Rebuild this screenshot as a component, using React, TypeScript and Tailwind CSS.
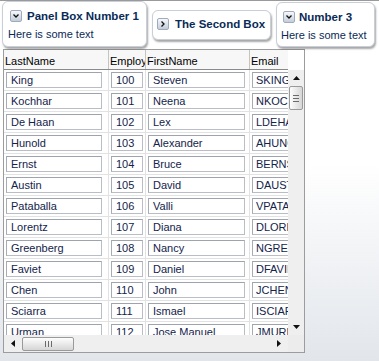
import React from 'react';

const rows = [
  ['King', '100', 'Steven', 'SKING'],
  ['Kochhar', '101', 'Neena', 'NKOCHHAR'],
  ['De Haan', '102', 'Lex', 'LDEHAAN'],
  ['Hunold', '103', 'Alexander', 'AHUNOLD'],
  ['Ernst', '104', 'Bruce', 'BERNST'],
  ['Austin', '105', 'David', 'DAUSTIN'],
  ['Pataballa', '106', 'Valli', 'VPATABAL'],
  ['Lorentz', '107', 'Diana', 'DLORENTZ'],
  ['Greenberg', '108', 'Nancy', 'NGREENBE'],
  ['Faviet', '109', 'Daniel', 'DFAVIET'],
  ['Chen', '110', 'John', 'JCHEN'],
  ['Sciarra', '111', 'Ismael', 'ISCIARRA'],
  ['Urman', '112', 'Jose Manuel', 'JMURMAN'],
];

const font = { fontFamily: '"Liberation Sans", Arial, sans-serif' };

const ToggleIcon = ({ open }: { open: boolean }) => (
  <span className="flex h-[12px] w-[12px] shrink-0 items-center justify-center rounded-[2px] border border-[#9fabbb] bg-gradient-to-b from-[#f7f9fc] to-[#c3cdd9]">
    <svg width="8" height="8" viewBox="0 0 8 8">
      {open ? (
        <path d="M1.5 2.5 L4 5 L6.5 2.5" stroke="#111" strokeWidth="1.3" fill="none" />
      ) : (
        <path d="M2.5 1.5 L5 4 L2.5 6.5" stroke="#111" strokeWidth="1.3" fill="none" />
      )}
    </svg>
  </span>
);

const Panel = ({
  title,
  open,
  className,
  headClass,
  bodyClass,
}: {
  title: string;
  open: boolean;
  className: string;
  headClass: string;
  bodyClass?: string;
}) => (
  <div
    className={`shrink-0 rounded-[6px] border border-[#c8cfd8] bg-white shadow-[1px_2px_2px_rgba(0,0,0,0.35)] ${className}`}
  >
    <div className={`flex items-center ${headClass}`}>
      <ToggleIcon open={open} />
      <span className="text-[11.5px] font-bold leading-[14px] whitespace-nowrap text-[#0a2a57]">{title}</span>
    </div>
    {open && (
      <div className={`text-[11px] leading-[14px] whitespace-nowrap text-[#0a2a57] ${bodyClass}`}>
        Here is some text
      </div>
    )}
  </div>
);

const Cell = ({ w, iw, value }: { w: string; iw: string; value: string }) => (
  <div className={`shrink-0 h-full border-r border-[#e2e2e2] pl-[2px] pt-[2px] ${w}`}>
    <div
      className={`h-[16px] overflow-hidden whitespace-nowrap border border-[#b9bec6] border-t-[#9ea4ad] border-l-[#a6acb5] bg-white pl-[4px] text-[11px] leading-[14px] text-[#13234a] ${iw}`}
    >
      {value}
    </div>
  </div>
);

export default function App() {
  return (
    <div
      style={font}
      className="h-[361px] w-[379px] overflow-hidden border-t border-[#9a9a9a] bg-gradient-to-b from-white from-[45%] to-[#e2e6eb]"
    >
      <div className="flex items-start gap-[5px] pl-[2px]">
        <Panel title="Panel Box Number 1" open className="mt-0 h-[46px] w-[145px]" headClass="gap-[5px] pl-[7px] pt-[7px]" bodyClass="pl-[5px] pt-[4px]" />
        <Panel title="The Second Box" open={false} className="mt-[9px] h-[30px] w-[119px]" headClass="gap-[6px] pl-[4px] pt-[6px]" />
        <Panel title="Number 3" open className="mt-[1px] h-[45px] w-[99px]" headClass="gap-[4px] pl-[6px] pt-[7px]" bodyClass="pl-[4px] pt-[4px]" />
      </div>

      <div className="ml-[3px] mt-[2px] flex h-[304px] w-[302px] border border-[#9c9c9c] bg-white">
        <div className="flex w-[284px] flex-col">
          <div className="flex h-[20px] shrink-0 border-b border-[#8a8a8a] bg-[#f7f7f7] text-[11px] text-black">
            <div className="w-[105px] shrink-0 border-r border-[#c4c4c4] pl-[1px] pt-[3px] overflow-hidden whitespace-nowrap">LastName</div>
            <div className="w-[37px] shrink-0 border-r border-[#c4c4c4] pl-[1px] pt-[3px] overflow-hidden whitespace-nowrap">EmployeeId</div>
            <div className="w-[104px] shrink-0 border-r border-[#c4c4c4] pl-[1px] pt-[3px] overflow-hidden whitespace-nowrap">FirstName</div>
            <div className="w-[38px] shrink-0 pl-[1px] pt-[3px] overflow-hidden whitespace-nowrap">Email</div>
          </div>
          <div className="h-[265px] shrink-0 overflow-hidden">
            {rows.map((r) => (
              <div key={r[1]} className="flex h-[21px] border-b border-[#e2e2e2] overflow-hidden">
                <Cell w="w-[105px]" iw="w-[96px]" value={r[0]} />
                <Cell w="w-[37px]" iw="w-[32px]" value={r[1]} />
                <Cell w="w-[104px]" iw="w-[97px]" value={r[2]} />
                <div className="shrink-0 w-[38px] overflow-hidden pl-[2px] pt-[2px]">
                  <div className="h-[16px] w-[60px] overflow-hidden whitespace-nowrap border border-[#b9bec6] border-t-[#9ea4ad] border-l-[#a6acb5] bg-white pl-[3px] text-[11px] leading-[14px] text-[#13234a]">
                    {r[3]}
                  </div>
                </div>
              </div>
            ))}
          </div>
          <div className="flex h-[17px] shrink-0 items-center bg-[#efefef]">
            <div className="flex w-[18px] justify-center">
              <svg width="4" height="7" viewBox="0 0 4 7"><path d="M4 0 L0 3.5 L4 7 Z" fill="#111" /></svg>
            </div>
            <div className="flex h-[14px] w-[52px] items-center justify-center gap-[2px] rounded-[2px] border border-[#9a9a9a] bg-gradient-to-b from-[#fdfdfd] to-[#d6d6d6]">
              <span className="h-[6px] w-[1px] bg-[#6a6a6a]" />
              <span className="h-[6px] w-[1px] bg-[#6a6a6a]" />
              <span className="h-[6px] w-[1px] bg-[#6a6a6a]" />
            </div>
            <div className="flex-1" />
            <div className="flex w-[18px] justify-center">
              <svg width="4" height="7" viewBox="0 0 4 7"><path d="M0 0 L4 3.5 L0 7 Z" fill="#111" /></svg>
            </div>
          </div>
        </div>
        <div className="flex w-[16px] flex-col">
          <div className="h-[20px] shrink-0 bg-white" />
          <div className="flex h-[265px] shrink-0 flex-col items-center bg-[#efefef]">
            <div className="flex h-[16px] items-center justify-center">
              <svg width="7" height="4" viewBox="0 0 7 4"><path d="M0 4 L3.5 0 L7 4 Z" fill="#111" /></svg>
            </div>
            <div className="flex h-[24px] w-[14px] flex-col items-center justify-center gap-[2px] rounded-[2px] border border-[#9a9a9a] bg-gradient-to-r from-[#fdfdfd] to-[#d6d6d6]">
              <span className="h-[1px] w-[6px] bg-[#6a6a6a]" />
              <span className="h-[1px] w-[6px] bg-[#6a6a6a]" />
              <span className="h-[1px] w-[6px] bg-[#6a6a6a]" />
            </div>
            <div className="flex-1" />
            <div className="flex h-[16px] items-center justify-center">
              <svg width="7" height="4" viewBox="0 0 7 4"><path d="M0 0 L3.5 4 L7 0 Z" fill="#111" /></svg>
            </div>
          </div>
          <div className="h-[17px] shrink-0 bg-[#ececec]" />
        </div>
      </div>
    </div>
  );
}
